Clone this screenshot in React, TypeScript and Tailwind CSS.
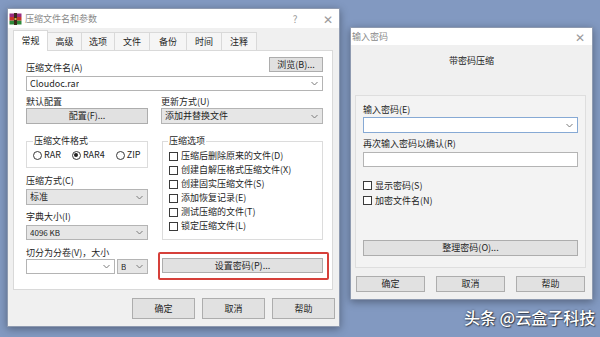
import React from "react";

const Chevron = () => (
  <svg width="7" height="5" viewBox="0 0 7 5" className="shrink-0">
    <path d="M0.5 1 L3.5 4 L6.5 1" fill="none" stroke="#7a7a7a" strokeWidth="1" />
  </svg>
);

function Combo({
  text,
  gray,
  className,
  blue,
}: {
  text?: string;
  gray?: boolean;
  className?: string;
  blue?: boolean;
}) {
  return (
    <div
      className={
        "flex items-center justify-between pl-[3px] pr-[4px] border " +
        (blue ? "border-[#86a9d4] " : "border-[#b4b4b4] ") +
        (gray ? "bg-[#e6e6e6] " : "bg-white ") +
        (className ?? "")
      }
    >
      <span className="truncate">{text}</span>
      <Chevron />
    </div>
  );
}

function Btn({ text, className }: { text: string; className?: string }) {
  return (
    <div
      className={
        "flex items-center justify-center bg-[#e1e1e1] border border-[#adadad] " +
        (className ?? "")
      }
    >
      {text}
    </div>
  );
}

const Check = ({ label, rowH = "h-[14px]" }: { label: string; rowH?: string }) => (
  <div className={"flex items-center gap-[3px] " + rowH}>
    <div className="w-[9px] h-[9px] border border-[#3a3a3a] bg-white shrink-0" />
    <span>{label}</span>
  </div>
);

const Radio = ({ label, on }: { label: string; on?: boolean }) => (
  <div className="flex items-center gap-[2px]">
    <div className="w-[9px] h-[9px] rounded-full border border-[#3a3a3a] bg-white flex items-center justify-center">
      {on && <div className="w-[4px] h-[4px] rounded-full bg-[#222]" />}
    </div>
    <span>{label}</span>
  </div>
);

const WinRarIcon = () => (
  <svg width="13" height="12" viewBox="0 0 13 12">
    <rect x="0.5" y="0.5" width="12" height="3.5" fill="#9b2d7f" />
    <rect x="0.5" y="4" width="12" height="3.7" fill="#c8352a" />
    <rect x="0.5" y="7.7" width="12" height="3.8" fill="#2f8a3a" />
    <rect x="5" y="0" width="3" height="12" fill="#3b2a1a" />
    <rect x="5.5" y="5" width="2" height="2" fill="#d9b24a" />
  </svg>
);

export default function App() {
  const tabs: [string, number][] = [
    ["高级", 34],
    ["选项", 33],
    ["文件", 35],
    ["备份", 37],
    ["时间", 35],
    ["注释", 35],
  ];
  return (
    <div className="relative w-[600px] h-[337px] overflow-hidden bg-[#8299c1] font-['Noto_Sans_CJK_SC',sans-serif] text-[9px] leading-[12px] text-[#1e1e1e]">
      {/* Left window */}
      <div className="absolute left-[7px] top-[8px] w-[333px] h-[319px] flex flex-col border border-[#8e9ab0] bg-[#f0f0f0] shadow-[0_2px_8px_rgba(0,0,0,0.35)]">
        <div className="h-[19px] bg-white flex items-center shrink-0">
          <div className="ml-[1px] mr-[3px] flex items-center">
            <WinRarIcon />
          </div>
          <span className="text-[#8a8a8a] text-[9px]">压缩文件名和参数</span>
          <div className="flex-1" />
          <span className="text-[#9a9a9a] text-[10px] w-[10px] text-center mr-[23px]">?</span>
          <span className="text-[#9a9a9a] text-[12px] font-light w-[10px] text-center mr-[6px]">✕</span>
        </div>
        <div className="flex-1 flex flex-col pt-[2px] pl-[5px]">
          {/* Tabs */}
          <div className="flex items-end h-[20px]">
            <div className="w-[35px] h-[21px] mb-[-1px] z-10 bg-white border-x border-t border-[#d9d9d9] flex items-center justify-center">
              常规
            </div>
            {tabs.map(([t, w]) => (
              <div
                key={t}
                style={{ width: w }}
                className="h-[18px] bg-[#f5f5f5] border-t border-r border-[#d9d9d9] flex items-center justify-center"
              >
                {t}
              </div>
            ))}
          </div>
          {/* Panel */}
          <div className="w-[320px] h-[240px] bg-white border border-[#d9d9d9] pl-[12px] pr-[9px] pt-[6px] flex flex-col">
            <div className="flex justify-between h-[16px]">
              <span className="self-end leading-[10px]">压缩文件名(A)</span>
              <Btn text="浏览(B)..." className="w-[54px] h-[15px]" />
            </div>
            <Combo text="Cloudoc.rar" className="mt-[3px] h-[15px]" />
            <div className="flex mt-[5px] h-[12px] gap-[13px]">
              <span className="w-[122px]">默认配置</span>
              <span>更新方式(U)</span>
            </div>
            <div className="flex gap-[13px] h-[16px]">
              <Btn text="配置(F)..." className="w-[122px] h-[16px]" />
              <Combo text="添加并替换文件" gray className="w-[162px] h-[16px]" />
            </div>
            <div className="flex gap-[14px]">
              {/* left col */}
              <div className="w-[122px] flex flex-col">
                <fieldset className="mt-[11px] border border-[#dcdcdc] pl-[6px] pb-[6px]">
                  <legend className="px-[1px] leading-[12px]">压缩文件格式</legend>
                  <div className="flex items-center h-[12px] mt-[2px] gap-[11px]">
                    <Radio label="RAR" />
                    <Radio label="RAR4" on />
                    <Radio label="ZIP" />
                  </div>
                </fieldset>
                <span className="mt-[7px]">压缩方式(C)</span>
                <Combo text="标准" gray className="mt-[2px] h-[16px]" />
                <span className="mt-[6px]">字典大小(I)</span>
                <Combo text="4096 KB" gray className="mt-[2px] h-[15px] text-[8px]" />
                <span className="mt-[7px]">切分为分卷(V)，大小</span>
                <div className="flex gap-[2px]">
                  <Combo className="w-[89px] h-[15px]" />
                  <Combo text="B" gray className="w-[31px] h-[15px] text-[8px]" />
                </div>
              </div>
              {/* right col */}
              <div className="w-[161px] flex flex-col">
                <fieldset className="mt-[11px] border border-[#dcdcdc] pl-[6px] pb-[6px]">
                  <legend className="px-[1px] leading-[12px] ml-[-1px]">压缩选项</legend>
                  <div className="flex flex-col mt-[2px]">
                    <Check label="压缩后删除原来的文件(D)" />
                    <Check label="创建自解压格式压缩文件(X)" />
                    <Check label="创建固实压缩文件(S)" />
                    <Check label="添加恢复记录(E)" />
                    <Check label="测试压缩的文件(T)" />
                    <Check label="锁定压缩文件(L)" />
                  </div>
                </fieldset>
                <div className="relative mt-[18px]">
                  <Btn text="设置密码(P)..." className="h-[15px]" />
                  <div className="absolute left-[-4px] right-[-6px] top-[-6px] bottom-[-7px] border-2 border-[#d6403a] rounded-[2px]" />
                </div>
              </div>
            </div>
          </div>
          {/* Bottom buttons */}
          <div className="flex justify-end gap-[7px] pr-[4px] mt-[8px]">
            <Btn text="确定" className="w-[63px] h-[21px]" />
            <Btn text="取消" className="w-[63px] h-[21px]" />
            <Btn text="帮助" className="w-[63px] h-[21px]" />
          </div>
        </div>
      </div>

      {/* Right window */}
      <div className="absolute left-[350px] top-[27px] w-[243px] h-[273px] flex flex-col border border-[#8e9ab0] bg-[#f0f0f0] shadow-[0_2px_8px_rgba(0,0,0,0.35)]">
        <div className="h-[17px] bg-white flex items-center shrink-0 pl-[1px]">
          <span className="text-[#8a8a8a]">输入密码</span>
          <div className="flex-1" />
          <span className="text-[#9a9a9a] text-[12px] font-light w-[10px] text-center mr-[7px]">✕</span>
        </div>
        <div className="flex-1 flex flex-col">
          <div className="text-center pt-[10px] h-[22px]">带密码压缩</div>
          <div className="ml-[4px] mt-[28px] w-[231px] h-[173px] border border-[#dedede] bg-[#f3f3f3] pl-[7px] pr-[7px] pt-[8px] flex flex-col">
            <span>输入密码(E)</span>
            <Combo blue className="mt-[1px] h-[16px]" />
            <span className="mt-[5px]">再次输入密码以确认(R)</span>
            <div className="mt-[2px] h-[15px] bg-white border border-[#b4b4b4]" />
            <div className="mt-[11px] flex flex-col">
              <Check label="显示密码(S)" rowH="h-[15px]" />
              <Check label="加密文件名(N)" rowH="h-[15px]" />
            </div>
            <Btn text="整理密码(O)..." className="mt-[32px] h-[16px]" />
          </div>
          <div className="flex gap-[11px] pl-[5px] mt-[8px]">
            <Btn text="确定" className="w-[69px] h-[16px]" />
            <Btn text="取消" className="w-[69px] h-[16px]" />
            <Btn text="帮助" className="w-[69px] h-[16px]" />
          </div>
        </div>
      </div>

      {/* Watermark */}
      <div className="absolute left-[464px] top-[307px] text-[16px] leading-[20px] text-white font-medium [text-shadow:0_0_2px_rgba(0,0,0,0.7),1px_1px_1px_rgba(0,0,0,0.5)]">
        头条 @云盒子科技
      </div>
    </div>
  );
}
